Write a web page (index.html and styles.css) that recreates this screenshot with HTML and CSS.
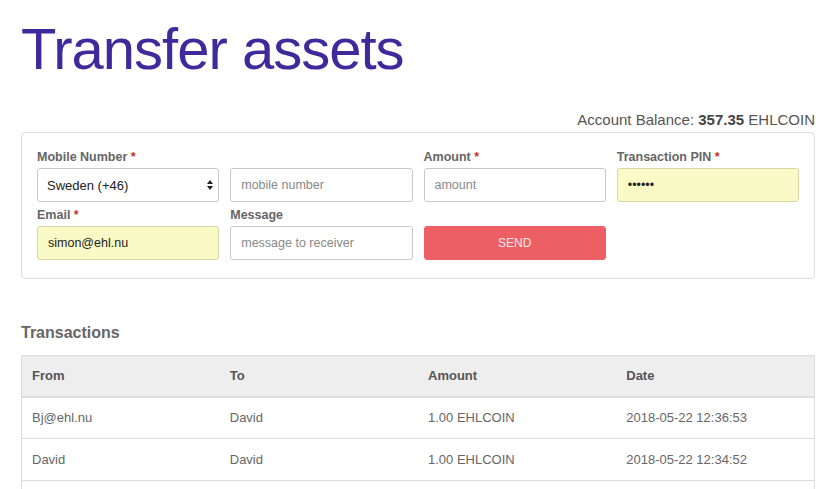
FILE: index.html
```html
<!DOCTYPE html>
<html>
<head>
<meta charset="utf-8">
<link rel="stylesheet" href="styles.css">
</head>
<body>
<div class="page">
  <h1 class="title">Transfer assets</h1>
  <div class="balance">Account Balance: <b>357.35</b> EHLCOIN</div>
  <form class="panel">
    <div class="field">
      <label class="lbl">Mobile Number <span class="req">*</span></label>
      <div class="select">
        <span>Sweden (+46)</span>
        <svg class="arrows" width="6" height="10" viewBox="0 0 6 10"><path d="M3 0 L6 4 L0 4 Z M3 10 L6 6 L0 6 Z" fill="#222"/></svg>
      </div>
    </div>
    <div class="field">
      <label class="lbl">&nbsp;</label>
      <input class="inp" placeholder="mobile number">
    </div>
    <div class="field">
      <label class="lbl">Amount <span class="req">*</span></label>
      <input class="inp" placeholder="amount">
    </div>
    <div class="field">
      <label class="lbl">Transaction PIN <span class="req">*</span></label>
      <input class="inp filled" type="password" value="123456">
    </div>
    <div class="field">
      <label class="lbl">Email <span class="req">*</span></label>
      <input class="inp filled" value="simon@ehl.nu">
    </div>
    <div class="field">
      <label class="lbl">Message</label>
      <input class="inp" placeholder="message to receiver">
    </div>
    <div class="field">
      <label class="lbl">&nbsp;</label>
      <button type="button" class="send">SEND</button>
    </div>
  </form>
  <h2 class="subtitle">Transactions</h2>
  <table class="tx">
    <thead>
      <tr><th>From</th><th>To</th><th>Amount</th><th>Date</th></tr>
    </thead>
    <tbody>
      <tr><td>Bj@ehl.nu</td><td>David</td><td>1.00 EHLCOIN</td><td>2018-05-22 12:36:53</td></tr>
      <tr><td>David</td><td>David</td><td>1.00 EHLCOIN</td><td>2018-05-22 12:34:52</td></tr>
      <tr><td>&nbsp;</td><td></td><td></td><td></td></tr>
    </tbody>
  </table>
</div>
</body>
</html>
```
FILE: styles.css
```css
* { box-sizing: border-box; }
html, body { margin: 0; padding: 0; background: #fff; }
body { font-family: "Liberation Sans", Arial, sans-serif; color: #555; overflow: hidden; }
.page { padding: 0 15px 0 21px; }
.title {
  margin: 14px 0 0 0;
  font-size: 58px;
  line-height: 70px;
  font-weight: normal;
  color: #3f2a9c;
  letter-spacing: -1px;
}
.balance {
  margin-top: 27px;
  text-align: right;
  font-size: 15px;
  line-height: 18px;
  color: #555;
}
.balance b { color: #444; }
.panel {
  margin-top: 3px;
  border: 1px solid #ddd;
  border-radius: 4px;
  padding: 16px 15px 18px;
  display: grid;
  grid-template-columns: repeat(4, 1fr);
  column-gap: 11px;
  row-gap: 5px;
}
.field { display: flex; flex-direction: column; min-width: 0; }
.lbl {
  font-size: 12.5px;
  font-weight: bold;
  line-height: 16px;
  color: #666;
  margin-bottom: 3px;
}
.req { color: #c9302c; }
.inp, .select, .send {
  height: 34px;
  width: 100%;
  border: 1px solid #c8c8c8;
  border-radius: 3px;
  padding: 0 10px;
  font-family: "Liberation Sans", Arial, sans-serif;
  font-size: 12.5px;
  color: #222;
  background: #fff;
  outline: none;
}
.inp::placeholder { color: #888; }
.filled { background: #fafac6; border-color: #d8d6a6; }
.select {
  display: flex;
  align-items: center;
  justify-content: space-between;
  padding: 0 4px 0 9px;
  font-size: 13px;
}
.arrows { margin-right: 1px; }
.send {
  background: #ec5f64;
  border-color: #ec5f64;
  color: #fde8e8;
  font-size: 12px;
  cursor: pointer;
}
.subtitle {
  margin: 44px 0 0 0;
  font-size: 16px;
  line-height: 20px;
  font-weight: bold;
  color: #666;
}
.tx {
  margin-top: 12px;
  width: 100%;
  border-collapse: collapse;
  border: 1px solid #ddd;
  table-layout: fixed;
  font-size: 13px;
}
.tx th {
  background: #eee;
  text-align: left;
  font-weight: bold;
  color: #555;
  height: 41px;
  padding: 0 10px;
  border-bottom: 2px solid #ddd;
}
.tx td {
  height: 42px;
  padding: 0 10px;
  color: #666;
  border-top: 1px solid #ddd;
}
```
